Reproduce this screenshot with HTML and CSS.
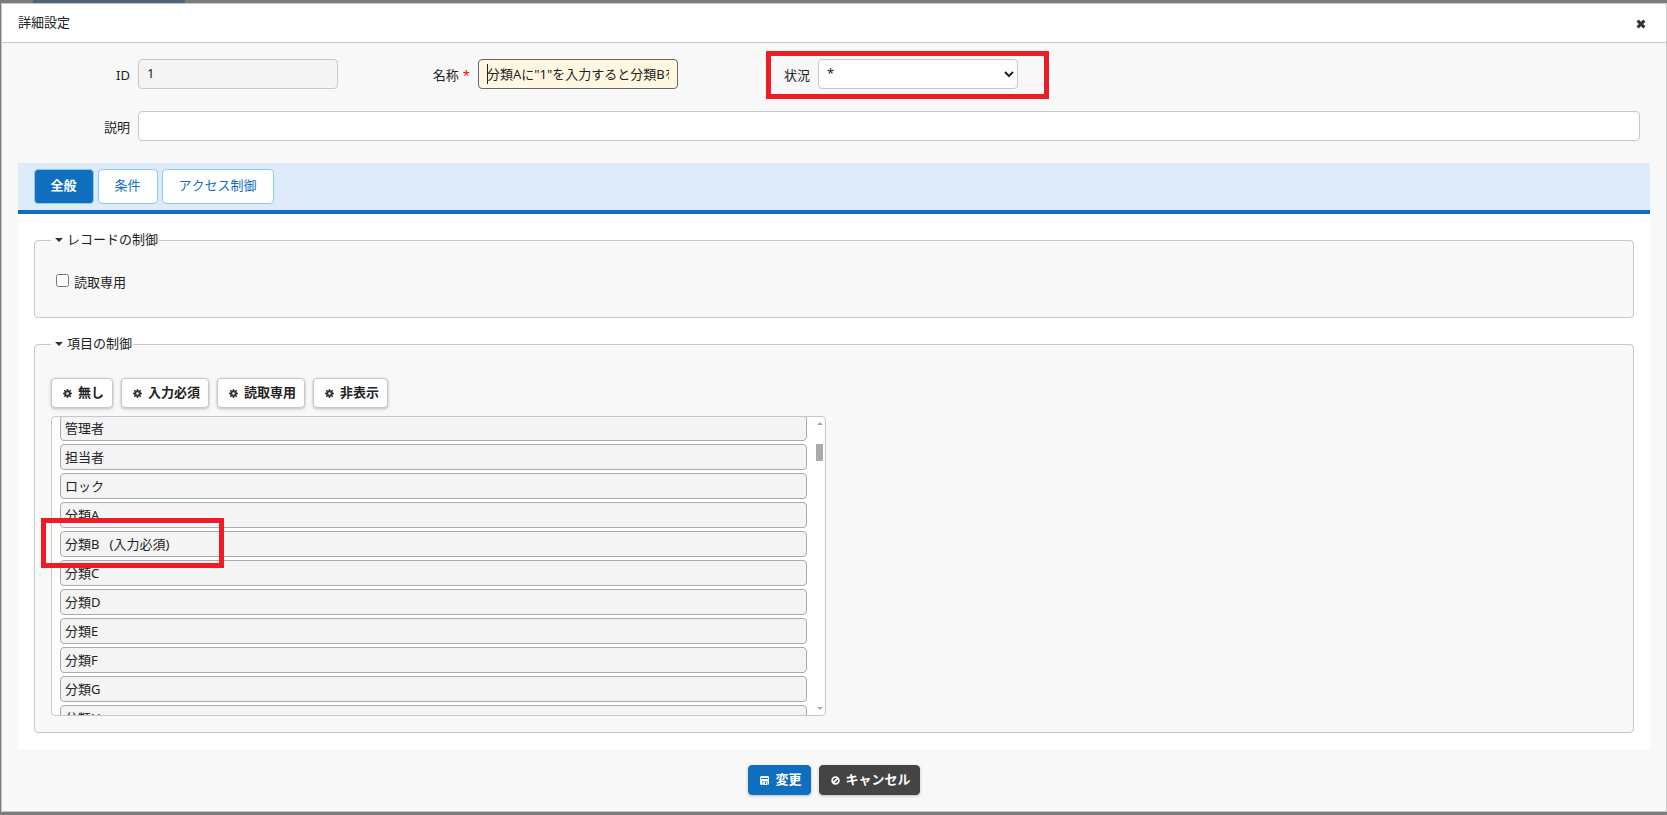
FILE: index.html
```html
<!DOCTYPE html>
<html lang="ja">
<head>
    <meta charset="utf-8">
    <meta name="viewport" content="width=device-width, initial-scale=1">
    <link rel="stylesheet" href="styles.css">
    <title>詳細設定</title>
</head>
<body>
<svg class="symbols">
    <symbol id="gear" viewBox="0 0 9 9">
        <circle cx="4.5" cy="4.5" r="2.3" fill="none" stroke="currentColor" stroke-width="2"/>
        <path d="M4.5 0v2M4.5 7v2M0 4.5h2M7 4.5h2M1.2 1.2l1.4 1.4M6.4 6.4l1.4 1.4M7.8 1.2L6.4 2.6M2.6 6.4L1.2 7.8" stroke="currentColor" stroke-width="1.4"/>
    </symbol>
    <symbol id="close" viewBox="0 0 10 10">
        <path d="M1.6 1.6l6.8 6.8M8.4 1.6L1.6 8.4" fill="none" stroke="currentColor" stroke-width="3"/>
    </symbol>
    <symbol id="disk" viewBox="0 0 9 9">
        <path fill-rule="evenodd" d="M1 0h7l1 1v7l-1 1H1L0 8V1zM1 2v1h7V2zM2.5 5v4H3V5.5h4V9h.5V5zM5 6v2h1V6z"/>
    </symbol>
    <symbol id="cancel" viewBox="0 0 9 9">
        <path d="M4.5 1.1a3.4 3.4 0 1 1 0 6.8a3.4 3.4 0 1 1 0-6.8M6.7 2.3L2.3 6.7" fill="none" stroke="currentColor" stroke-width="1.7"/>
    </symbol>
</svg>

<div class="dialog">
    <header>
        <span>詳細設定</span>
        <svg class="close"><use href="#close"/></svg>
    </header>

    <div class="fields">
        <div class="field">
            <label>ID</label>
            <input class="control readonly" value="1" readonly>
        </div>
        <div class="field">
            <label>名称<span class="required">*</span></label>
            <div class="focusWrap">
                <input class="control focused" value='分類Aに"1"を入力すると分類Bを'>
                <i class="caret"></i>
            </div>
        </div>
        <div class="field">
            <label>状況</label>
            <select class="control"><option>*</option></select>
            <div class="mark markStatus"></div>
        </div>
        <div class="field wide">
            <label>説明</label>
            <input class="control">
        </div>
    </div>

    <nav>
        <button class="tab active">全般</button>
        <button class="tab">条件</button>
        <button class="tab">アクセス制御</button>
    </nav>

    <main>
        <fieldset class="record">
            <legend><i class="tri"></i>レコードの制御</legend>
            <label class="check"><input type="checkbox">読取専用</label>
        </fieldset>
        <fieldset class="columns">
            <legend><i class="tri"></i>項目の制御</legend>
            <div class="btnGroup">
                <button class="btn"><svg><use href="#gear"/></svg>無し</button>
                <button class="btn"><svg><use href="#gear"/></svg>入力必須</button>
                <button class="btn"><svg><use href="#gear"/></svg>読取専用</button>
                <button class="btn"><svg><use href="#gear"/></svg>非表示</button>
            </div>
            <div class="listWrap">
                <div class="list">
                    <ol>
                        <li>管理者</li>
                        <li>担当者</li>
                        <li>ロック</li>
                        <li>分類A</li>
                        <li>分類B&nbsp;&nbsp; (入力必須)</li>
                        <li>分類C</li>
                        <li>分類D</li>
                        <li>分類E</li>
                        <li>分類F</li>
                        <li>分類G</li>
                        <li>分類H</li>
                    </ol>
                    <div class="scrollbar">
                        <i class="up"></i>
                        <i class="thumb"></i>
                        <i class="down"></i>
                    </div>
                </div>
                <div class="mark markItem"></div>
            </div>
        </fieldset>
    </main>

    <footer>
        <button class="btn primary"><svg><use href="#disk"/></svg>変更</button>
        <button class="btn dark"><svg><use href="#cancel"/></svg>キャンセル</button>
    </footer>
</div>
</body>
</html>
```
FILE: styles.css
```css
* { box-sizing: border-box; }
html, body { width: 100%; height: 100vh; margin: 0; overflow: hidden; }
body { padding: 3px 0 3px 1px; background: linear-gradient(90deg, transparent 33px, #506478 33px, #506478 185px, transparent 185px) 0 0 / 100% 3px no-repeat #7c7c7c; }
body, button, input, select { font-family: "Noto Sans", "Noto Sans CJK JP", sans-serif; font-size: 13px; line-height: 18px; font-kerning: none; color: #222; }
button { margin: 0; cursor: pointer; }
svg { flex: none; width: 9px; height: 9px; fill: currentColor; }
.symbols { display: none; }

.dialog { display: flex; flex-direction: column; height: 809px; border: 1px solid #c8c8c8; background: #f8f8f8; }
header { display: flex; align-items: center; justify-content: space-between; height: 39px; padding: 0 20px 2px 16px; background: #fff; border-bottom: 1px solid #c8c8c8; }
.close { width: 10px; height: 10px; margin-top: 3px; color: #333; }

/* form fields */
.fields { display: flex; flex-wrap: wrap; row-gap: 22px; padding: 16px 26px 22px 16px; }
.field { position: relative; display: flex; width: 340px; height: 30px; }
.field label { width: 120px; padding: 7px 8px 0 0; text-align: right; }
.field .control { width: 200px; height: 30px; margin: 0; padding: 0 8px 2px; border: 1px solid #c8c8c8; border-radius: 4px; background: #fff; outline: none; }
.field .readonly { background: #f4f4f4; }
.field .focused { background: #fff7e1; border-color: #666; }
.field select.control { padding: 0 0 2px 4px; }
.field.wide { width: 100%; }
.field.wide .control { flex: 1; }
.required { margin-left: 4px; color: #f00; }
.focusWrap { position: relative; }
.caret { position: absolute; left: 9px; top: 5px; width: 1px; height: 20px; background: #222; }

/* red callouts */
.mark { position: absolute; border: 5px solid #ee1c24; }
.markStatus { left: 68px; top: -8px; width: 283px; height: 48px; }
.markItem { left: -10px; top: 102px; width: 183px; height: 50px; }

nav { display: flex; gap: 4px; height: 51px; margin: 0 16px; padding: 6px 16px; background: #deebf8; border-bottom: 4px solid #0f6ebe; }
.tab { height: 35px; padding: 0 16px 3px 15px; border: 1px solid #8ec8fa; border-radius: 4px; background: #fff; color: #0f6ebe; min-width: 60px; }
.tab:last-child { min-width: 112px; }
.tab.active { background: #0f6ebe; color: #fff; font-weight: bold; }

main { height: 535px; margin: 0 16px; padding: 17px 16px 0; background: #fff; }
fieldset { margin: 0; padding: 0 16px; border: 1px solid #c8c8c8; border-radius: 4px; background: #f8f8f8; }
legend { display: flex; align-items: center; height: 18px; padding: 0 1px 2px 4px; }
.tri { margin: 2px 4px 0 0; border: 4px solid transparent; border-top-color: #333; border-bottom: 0; }
.record { height: 87px; margin-bottom: 17px; }
.columns { height: 398px; }
.check { display: flex; align-items: flex-start; padding: 24px 0 0 5px; }
.check input { width: 13px; height: 13px; margin: 1px 5px 0 0; }

.btnGroup { display: flex; gap: 8px; padding: 25px 0 8px; }
.btn { display: flex; align-items: center; height: 30px; padding: 0 8px 2px 11px; border: 1px solid #c8c8c8; border-radius: 4px; background: #fff; box-shadow: 0 1px 3px rgba(0, 0, 0, .25); font-weight: bold; white-space: nowrap; }
.btn svg { margin: 2px 6px 0 0; color: #333; }
.btn.primary { background: #0f6ebe; border-color: #0f6ebe; color: #fff; }
.btn.dark { background: #444; border-color: #444; color: #fff; }
.btn.primary svg, .btn.dark svg { color: #fff; }

/* item list */
.listWrap { position: relative; width: 775px; }
.list { display: flex; height: 300px; padding-left: 8px; border: 1px solid #c8c8c8; border-radius: 4px; background: #fff; overflow: hidden; }
ol { width: 747px; margin: -2px 0 0; padding: 0; list-style: none; }
li { height: 26px; margin-bottom: 3px; padding: 3px 4px; border: 1px solid #aaa; border-radius: 4px; background: #f4f4f4; }
.scrollbar { display: flex; flex-direction: column; align-items: center; width: 7px; margin-left: 9px; padding: 5px 0; }
.up, .down { border: 3px solid transparent; }
.up { border-bottom-color: #aaa; border-top: 0; }
.down { margin-top: auto; border-top-color: #aaa; border-bottom: 0; }
.thumb { width: 7px; height: 17px; margin-top: 19px; background: #aaa; }

footer { display: flex; justify-content: center; gap: 8px; padding: 16px 0; }
```
